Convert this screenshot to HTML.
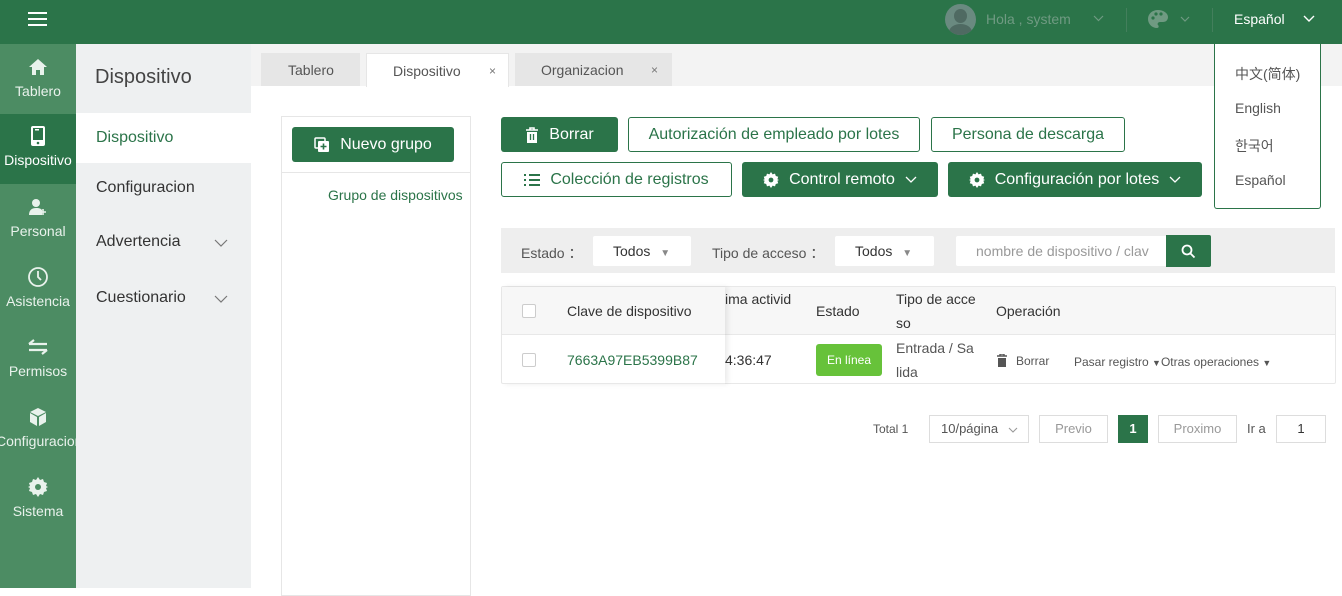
<!DOCTYPE html>
<html><head><meta charset="utf-8"><style>
*{box-sizing:border-box;margin:0;padding:0}
body{width:1342px;height:588px;overflow:hidden;position:relative;background:#fff;font-family:"Liberation Sans","Noto Sans CJK SC",sans-serif;color:#333}
.a{position:absolute}
.top{left:0;top:0;width:1342px;height:44px;background:#2b7449}
.rail{left:0;top:44px;width:76px;height:544px;background:#4c8c63}
.ri{position:absolute;left:0;width:76px;height:70px;text-align:center;color:#e9f2ec;font-size:14px}
.ri svg{display:block;margin:13px auto 6px}
.ri.act{background:#2b7449;color:#fff}
.sub{left:76px;top:44px;width:175px;height:544px;background:#eef0f1}
.btn{position:absolute;height:35px;border-radius:3px;font-size:16px;display:flex;align-items:center;justify-content:center;gap:10px}
.fill{background:#2b7449;color:#fff}
.out{border:1px solid #2b7449;color:#2b7449;background:#fff}
.tab{position:absolute;top:53px;height:33px;background:#e6e6e6;font-size:14px;color:#555;line-height:34px}
.sel{position:absolute;top:236px;height:30px;background:#fff;border-radius:2px;font-size:14px;color:#333;line-height:30px}
.th{position:absolute;font-size:14px;color:#333}
.chev{display:inline-block;vertical-align:middle}
</style></head><body>
<div class="a top"></div>
<div class="a" style="left:28px;top:12px;width:19px;height:2px;background:#fff;box-shadow:0 6px 0 #fff,0 12px 0 #fff"></div>
<div class="a" style="left:945px;top:4px;width:31px;height:31px;border-radius:50%;background:#6a8a80;overflow:hidden"><div style="position:absolute;left:9px;top:5px;width:13px;height:14px;border-radius:50%;background:#4f6a62"></div><div style="position:absolute;left:4px;top:20px;width:23px;height:16px;border-radius:50%;background:#4f6a62"></div></div>
<div class="a" style="left:986px;top:11px;font-size:14px;color:#6f9a82">Hola , system</div>
<svg class="a" style="left:1093px;top:15px" width="11" height="7" viewBox="0 0 11 7"><path d="M1 1l4.5 4.5L10 1" fill="none" stroke="#6f9a82" stroke-width="1.2"/></svg>
<div class="a" style="left:1126px;top:8px;width:1px;height:24px;background:#437f5c"></div>
<svg class="a" style="left:1147px;top:9px" width="22" height="20" viewBox="0 0 22 20"><path d="M11 1C5 1 1 5 1 10s4 9 9 9c2 0 2-2 1-3s0-3 2-3h3c3 0 5-2 5-5C21 4 16 1 11 1z" fill="#6f9a82"/><circle cx="6" cy="9" r="1.6" fill="#2b7449"/><circle cx="9" cy="5" r="1.6" fill="#2b7449"/><circle cx="14" cy="5" r="1.6" fill="#2b7449"/></svg>
<svg class="a" style="left:1180px;top:16px" width="10" height="6" viewBox="0 0 10 6"><path d="M1 1l4 4 4-4" fill="none" stroke="#6f9a82" stroke-width="1.2"/></svg>
<div class="a" style="left:1212px;top:8px;width:1px;height:24px;background:#437f5c"></div>
<div class="a" style="left:1234px;top:11px;font-size:14px;color:#fff">Español</div>
<svg class="a" style="left:1303px;top:15px" width="12" height="8" viewBox="0 0 12 8"><path d="M1 1l5 5 5-5" fill="none" stroke="#fff" stroke-width="1.4"/></svg>

<div class="a rail">
<div class="ri" style="top:0"><svg width="20" height="20" viewBox="0 0 20 20"><path d="M10 2L1 10h3v8h4v-5h4v5h4v-8h3z" fill="#e9f2ec"/></svg>Tablero</div>
<div class="ri act" style="top:70px"><svg width="16" height="22" viewBox="0 0 16 22" style="margin-top:11px;margin-bottom:5px"><rect x="1" y="1" width="14" height="20" rx="2" fill="#fff"/><rect x="3" y="3" width="10" height="12" fill="#2b7449"/><rect x="5" y="4" width="4" height="1.5" fill="#fff"/><circle cx="8" cy="18" r="1.3" fill="#2b7449"/></svg>Dispositivo</div>
<div class="ri" style="top:140px"><svg width="20" height="20" viewBox="0 0 20 20"><circle cx="8" cy="6" r="4" fill="#e9f2ec"/><path d="M1 18c0-5 3-7 7-7s5 1 6 2v5z" fill="#e9f2ec"/><path d="M15 12v6M12 15h6" stroke="#e9f2ec" stroke-width="1.6"/></svg>Personal</div>
<div class="ri" style="top:210px"><svg width="22" height="22" viewBox="0 0 22 22" style="margin-top:12px;margin-bottom:5px"><circle cx="11" cy="11" r="9" fill="none" stroke="#e9f2ec" stroke-width="1.8"/><path d="M11 5v6l3 3" fill="none" stroke="#e9f2ec" stroke-width="1.8"/></svg>Asistencia</div>
<div class="ri" style="top:280px"><svg width="22" height="20" viewBox="0 0 22 20"><path d="M2 7h18M2 7l5-4M20 13H2M20 13l-5 4" fill="none" stroke="#e9f2ec" stroke-width="2.2"/></svg>Permisos</div>
<div class="ri" style="top:350px"><svg width="20" height="20" viewBox="0 0 20 20"><path d="M10 1l8 4-8 4-8-4z M2 6l7 4v9l-7-4z M18 6l-7 4v9l7-4z" fill="#e9f2ec"/></svg><span style="margin-left:-4px;white-space:nowrap">Configuracion</span></div>
<div class="ri" style="top:420px"><svg width="20" height="20" viewBox="0 0 20 20"><path d="M10 0l2 3 3-1 1 3 3 1-1 3 2 1-2 1 1 3-3 1-1 3-3-1-2 3-2-3-3 1-1-3-3-1 1-3-2-1 2-1-1-3 3-1 1-3 3 1z" fill="#e9f2ec"/><circle cx="10" cy="10" r="3" fill="#4c8c63"/></svg>Sistema</div>
</div>

<div class="a sub">
<div class="a" style="left:19px;top:22px;font-size:20px;color:#444">Dispositivo</div>
<div class="a" style="left:0;top:69px;width:175px;height:50px;background:#fff"></div>
<div class="a" style="left:20px;top:85px;font-size:16px;color:#2b7449">Dispositivo</div>
<div class="a" style="left:20px;top:135px;font-size:16px;color:#333">Configuracion</div>
<div class="a" style="left:20px;top:189px;font-size:16px;color:#333">Advertencia</div>
<svg class="a" style="left:138px;top:195px" width="14" height="8" viewBox="0 0 14 8"><path d="M1 1l6 6 6-6" fill="none" stroke="#777" stroke-width="1.2"/></svg>
<div class="a" style="left:20px;top:245px;font-size:16px;color:#333">Cuestionario</div>
<svg class="a" style="left:138px;top:251px" width="14" height="8" viewBox="0 0 14 8"><path d="M1 1l6 6 6-6" fill="none" stroke="#777" stroke-width="1.2"/></svg>
</div>

<div class="a" style="left:251px;top:44px;width:1091px;height:42px;background:#f3f3f3"></div>
<div class="tab" style="left:261px;width:99px;padding-left:27px">Tablero</div>
<div class="tab" style="left:366px;width:143px;background:#fff;height:34px;border:1px solid #e6e6e6;border-bottom:0;padding-left:26px">Dispositivo<span style="position:absolute;left:122px;font-size:12px;color:#777">×</span></div>
<div class="tab" style="left:515px;width:157px;padding-left:26px">Organizacion<span style="position:absolute;left:136px;font-size:12px;color:#777">×</span></div>

<div class="a" style="left:281px;top:116px;width:190px;height:480px;border:1px solid #e6e6e6"></div>
<div class="btn fill" style="left:292px;top:127px;width:162px"><svg width="16" height="16" viewBox="0 0 16 16"><rect x="1" y="1" width="10" height="10" rx="1" fill="none" stroke="#fff" stroke-width="1.5"/><rect x="4" y="4" width="11" height="11" rx="1" fill="#fff"/><path d="M9.5 6.5v6M6.5 9.5h6" stroke="#2b7449" stroke-width="1.6"/></svg>Nuevo grupo</div>
<div class="a" style="left:282px;top:172px;width:188px;height:1px;background:#e6e6e6"></div>
<div class="a" style="left:328px;top:187px;font-size:14px;color:#2b7449">Grupo de dispositivos</div>

<div class="btn fill" style="left:501px;top:117px;width:117px"><svg width="14" height="16" viewBox="0 0 14 16"><path d="M1 3h12M5 3V1h4v2" stroke="#fff" stroke-width="1.6" fill="none"/><path d="M2 5h10v11H2z" fill="#fff"/><path d="M5.5 7v6M8.5 7v6" stroke="#2b7449" stroke-width="1.3"/></svg>Borrar</div>
<div class="btn out" style="left:628px;top:117px;width:292px">Autorización de empleado por lotes</div>
<div class="btn out" style="left:931px;top:117px;width:194px">Persona de descarga</div>
<div class="btn out" style="left:501px;top:162px;width:231px"><svg width="16" height="14" viewBox="0 0 16 14"><path d="M0 2h2M0 7h2M0 12h2M5 2h11M5 7h11M5 12h11" stroke="#2b7449" stroke-width="2"/></svg>Colección de registros</div>
<div class="btn fill" style="left:742px;top:162px;width:196px"><svg width="16" height="16" viewBox="0 0 20 20"><path d="M10 0l2 3 3-1 1 3 3 1-1 3 2 1-2 1 1 3-3 1-1 3-3-1-2 3-2-3-3 1-1-3-3-1 1-3-2-1 2-1-1-3 3-1 1-3 3 1z" fill="#fff"/><circle cx="10" cy="10" r="3" fill="#2b7449"/></svg>Control remoto <svg class="chev" width="12" height="7" viewBox="0 0 12 7"><path d="M1 1l5 5 5-5" fill="none" stroke="#fff" stroke-width="1.3"/></svg></div>
<div class="btn fill" style="left:948px;top:162px;width:254px"><svg width="16" height="16" viewBox="0 0 20 20"><path d="M10 0l2 3 3-1 1 3 3 1-1 3 2 1-2 1 1 3-3 1-1 3-3-1-2 3-2-3-3 1-1-3-3-1 1-3-2-1 2-1-1-3 3-1 1-3 3 1z" fill="#fff"/><circle cx="10" cy="10" r="3" fill="#2b7449"/></svg>Configuración por lotes <svg class="chev" width="12" height="7" viewBox="0 0 12 7"><path d="M1 1l5 5 5-5" fill="none" stroke="#fff" stroke-width="1.3"/></svg></div>

<div class="a" style="left:501px;top:228px;width:834px;height:45px;background:#eeeeee"></div>
<div class="a" style="left:521px;top:243px;font-size:14px;color:#555">Estado ：</div>
<div class="sel" style="left:593px;width:98px;padding-left:20px">Todos <span style="font-size:10px;color:#888;margin-left:6px">▼</span></div>
<div class="a" style="left:712px;top:243px;font-size:14px;color:#555">Tipo de acceso ：</div>
<div class="sel" style="left:835px;width:99px;padding-left:20px">Todos <span style="font-size:10px;color:#888;margin-left:6px">▼</span></div>
<div class="sel" style="left:956px;width:211px;padding-left:20px;color:#999;overflow:hidden;white-space:nowrap">nombre de dispositivo / clav</div>
<div class="a" style="left:1166px;top:235px;width:45px;height:32px;background:#2b7449;border-radius:0 2px 2px 0"><svg style="position:absolute;left:15px;top:9px" width="15" height="15" viewBox="0 0 15 15"><circle cx="6" cy="6" r="4.5" fill="none" stroke="#fff" stroke-width="1.8"/><path d="M9.5 9.5l4 4" stroke="#fff" stroke-width="1.8"/></svg></div>

<div class="a" style="left:501px;top:286px;width:835px;height:98px;border:1px solid #e8e8e8;border-radius:2px"></div>
<div class="a" style="left:502px;top:287px;width:833px;height:48px;background:#f7f7f7;border-bottom:1px solid #e8e8e8"></div>
<div class="a" style="left:502px;top:287px;width:223px;height:97px;background:transparent;box-shadow:3px 0 5px rgba(0,0,0,.08)"></div>
<div class="a" style="left:522px;top:304px;width:14px;height:14px;border:1px solid #ccc;background:#fff;border-radius:2px"></div>
<div class="th" style="left:567px;top:303px">Clave de dispositivo</div>
<div class="th" style="left:725px;top:291px">ima activid</div>
<div class="th" style="left:816px;top:303px">Estado</div>
<div class="th" style="left:896px;top:291px;line-height:24px;margin-top:-4px">Tipo de acce<br>so</div>
<div class="th" style="left:996px;top:303px">Operación</div>
<div class="a" style="left:522px;top:353px;width:14px;height:14px;border:1px solid #ccc;background:#fff;border-radius:2px"></div>
<div class="th" style="left:567px;top:352px;color:#2b7449">7663A97EB5399B87</div>
<div class="th" style="left:725px;top:352px">4:36:47</div>
<div class="a" style="left:816px;top:344px;width:66px;height:32px;background:#67c23a;border-radius:3px;color:#fff;font-size:12px;text-align:center;line-height:32px">En línea</div>
<div class="th" style="left:896px;top:339px;line-height:24px;margin-top:-3px;color:#555">Entrada / Sa<br>lida</div>
<svg class="a" style="left:997px;top:354px" width="10" height="13" viewBox="0 0 10 13"><path d="M0 2h10M3 2V0h4v2" stroke="#555" stroke-width="1.4" fill="none"/><path d="M1 4h8v9H1z" fill="#555"/></svg>
<div class="a" style="left:1016px;top:354px;font-size:12px;color:#555">Borrar</div>
<div class="a" style="left:1074px;top:355px;font-size:12px;color:#555">Pasar registro <span style="font-size:9px">▼</span>Otras operaciones <span style="font-size:9px">▼</span></div>

<div class="a" style="left:873px;top:422px;font-size:12px;color:#555">Total 1</div>
<div class="a" style="left:929px;top:415px;width:100px;height:28px;border:1px solid #ddd;font-size:13px;color:#555;line-height:26px;padding-left:11px">10/página <svg class="chev" style="margin-left:6px" width="10" height="6" viewBox="0 0 10 6"><path d="M1 1l4 4 4-4" fill="none" stroke="#999" stroke-width="1.1"/></svg></div>
<div class="a" style="left:1039px;top:415px;width:69px;height:28px;border:1px solid #ddd;font-size:13px;color:#999;line-height:26px;text-align:center">Previo</div>
<div class="a" style="left:1118px;top:415px;width:30px;height:28px;background:#2b7449;color:#fff;font-size:13px;font-weight:bold;line-height:28px;text-align:center">1</div>
<div class="a" style="left:1158px;top:415px;width:79px;height:28px;border:1px solid #ddd;font-size:13px;color:#999;line-height:26px;text-align:center">Proximo</div>
<div class="a" style="left:1247px;top:421px;font-size:13px;color:#555">Ir a</div>
<div class="a" style="left:1276px;top:415px;width:50px;height:28px;border:1px solid #ddd;font-size:13px;color:#333;line-height:26px;text-align:center">1</div>

<div class="a" style="left:1214px;top:44px;width:107px;height:165px;background:#fff;border:1px solid #2b7449;border-top:0;border-radius:0 0 3px 3px"></div>
<div class="a" style="left:1235px;top:64px;font-size:14px;color:#555">中文(简体)</div>
<div class="a" style="left:1235px;top:100px;font-size:14px;color:#555">English</div>
<div class="a" style="left:1235px;top:136px;font-size:14px;color:#555">한국어</div>
<div class="a" style="left:1235px;top:172px;font-size:14px;color:#555">Español</div>
</body></html>
